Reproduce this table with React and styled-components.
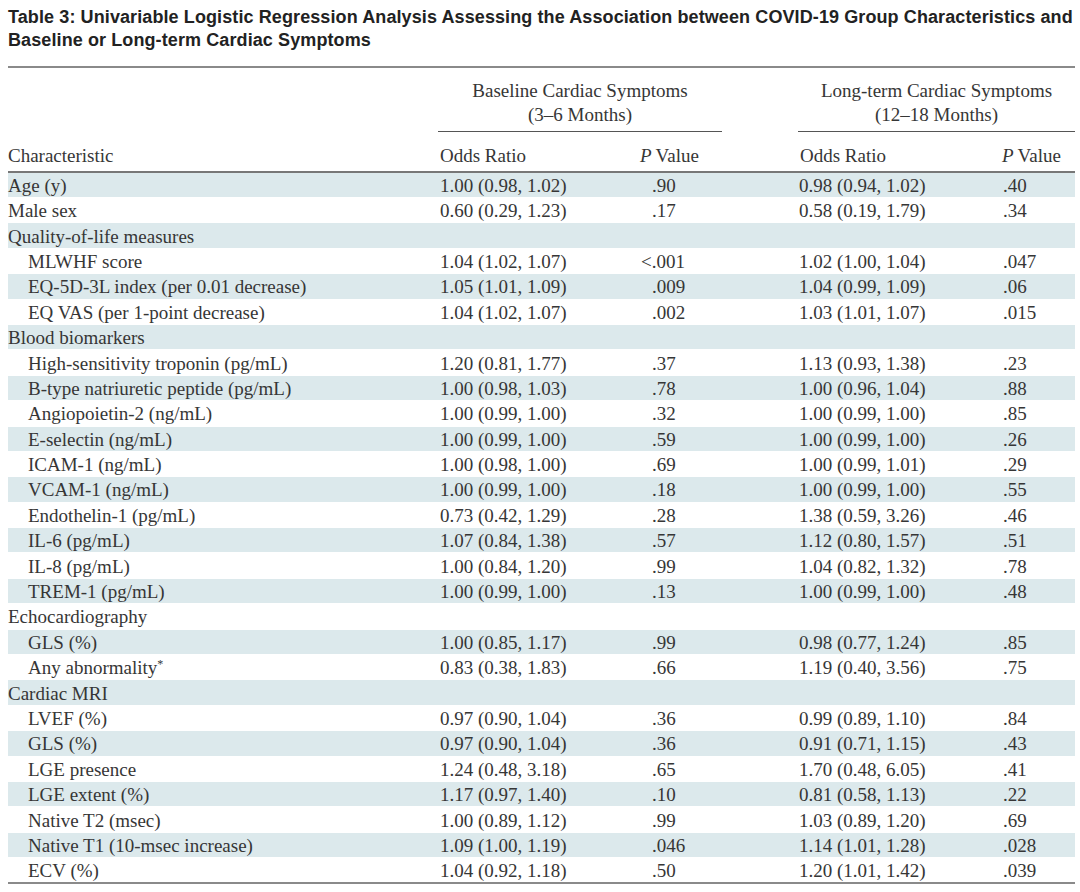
import styled, { createGlobalStyle } from 'styled-components';

const GlobalStyle = createGlobalStyle`
  body {
    margin: 0;
    background: #ffffff;
  }
`;

const rows = [
  { label: 'Age (y)', or1: '1.00 (0.98, 1.02)', p1: '.90', or2: '0.98 (0.94, 1.02)', p2: '.40' },
  { label: 'Male sex', or1: '0.60 (0.29, 1.23)', p1: '.17', or2: '0.58 (0.19, 1.79)', p2: '.34' },
  { label: 'Quality-of-life measures', group: true },
  { label: 'MLWHF score', sub: true, or1: '1.04 (1.02, 1.07)', p1: '<.001', or2: '1.02 (1.00, 1.04)', p2: '.047' },
  { label: 'EQ-5D-3L index (per 0.01 decrease)', sub: true, or1: '1.05 (1.01, 1.09)', p1: '.009', or2: '1.04 (0.99, 1.09)', p2: '.06' },
  { label: 'EQ VAS (per 1-point decrease)', sub: true, or1: '1.04 (1.02, 1.07)', p1: '.002', or2: '1.03 (1.01, 1.07)', p2: '.015' },
  { label: 'Blood biomarkers', group: true },
  { label: 'High-sensitivity troponin (pg/mL)', sub: true, or1: '1.20 (0.81, 1.77)', p1: '.37', or2: '1.13 (0.93, 1.38)', p2: '.23' },
  { label: 'B-type natriuretic peptide (pg/mL)', sub: true, or1: '1.00 (0.98, 1.03)', p1: '.78', or2: '1.00 (0.96, 1.04)', p2: '.88' },
  { label: 'Angiopoietin-2 (ng/mL)', sub: true, or1: '1.00 (0.99, 1.00)', p1: '.32', or2: '1.00 (0.99, 1.00)', p2: '.85' },
  { label: 'E-selectin (ng/mL)', sub: true, or1: '1.00 (0.99, 1.00)', p1: '.59', or2: '1.00 (0.99, 1.00)', p2: '.26' },
  { label: 'ICAM-1 (ng/mL)', sub: true, or1: '1.00 (0.98, 1.00)', p1: '.69', or2: '1.00 (0.99, 1.01)', p2: '.29' },
  { label: 'VCAM-1 (ng/mL)', sub: true, or1: '1.00 (0.99, 1.00)', p1: '.18', or2: '1.00 (0.99, 1.00)', p2: '.55' },
  { label: 'Endothelin-1 (pg/mL)', sub: true, or1: '0.73 (0.42, 1.29)', p1: '.28', or2: '1.38 (0.59, 3.26)', p2: '.46' },
  { label: 'IL-6 (pg/mL)', sub: true, or1: '1.07 (0.84, 1.38)', p1: '.57', or2: '1.12 (0.80, 1.57)', p2: '.51' },
  { label: 'IL-8 (pg/mL)', sub: true, or1: '1.00 (0.84, 1.20)', p1: '.99', or2: '1.04 (0.82, 1.32)', p2: '.78' },
  { label: 'TREM-1 (pg/mL)', sub: true, or1: '1.00 (0.99, 1.00)', p1: '.13', or2: '1.00 (0.99, 1.00)', p2: '.48' },
  { label: 'Echocardiography', group: true },
  { label: 'GLS (%)', sub: true, or1: '1.00 (0.85, 1.17)', p1: '.99', or2: '0.98 (0.77, 1.24)', p2: '.85' },
  { label: 'Any abnormality', mark: '*', sub: true, or1: '0.83 (0.38, 1.83)', p1: '.66', or2: '1.19 (0.40, 3.56)', p2: '.75' },
  { label: 'Cardiac MRI', group: true },
  { label: 'LVEF (%)', sub: true, or1: '0.97 (0.90, 1.04)', p1: '.36', or2: '0.99 (0.89, 1.10)', p2: '.84' },
  { label: 'GLS (%)', sub: true, or1: '0.97 (0.90, 1.04)', p1: '.36', or2: '0.91 (0.71, 1.15)', p2: '.43' },
  { label: 'LGE presence', sub: true, or1: '1.24 (0.48, 3.18)', p1: '.65', or2: '1.70 (0.48, 6.05)', p2: '.41' },
  { label: 'LGE extent (%)', sub: true, or1: '1.17 (0.97, 1.40)', p1: '.10', or2: '0.81 (0.58, 1.13)', p2: '.22' },
  { label: 'Native T2 (msec)', sub: true, or1: '1.00 (0.89, 1.12)', p1: '.99', or2: '1.03 (0.89, 1.20)', p2: '.69' },
  { label: 'Native T1 (10-msec increase)', sub: true, or1: '1.09 (1.00, 1.19)', p1: '.046', or2: '1.14 (1.01, 1.28)', p2: '.028' },
  { label: 'ECV (%)', sub: true, or1: '1.04 (0.92, 1.18)', p1: '.50', or2: '1.20 (1.01, 1.42)', p2: '.039' },
];

function PValue({ value }) {
  if (value && value.startsWith('<')) {
    return <><Less>&lt;</Less>{value.slice(1)}</>;
  }
  return value || null;
}

export default function App() {
  return (
    <>
      <GlobalStyle />
      <Page>
        <Title>
          Table 3: Univariable Logistic Regression Analysis Assessing the Association between COVID-19 Group Characteristics and
          <br />
          Baseline or Long-term Cardiac Symptoms
        </Title>
        <Table>
          <colgroup>
            <col style={{ width: 430 }} />
            <col style={{ width: 202 }} />
            <col style={{ width: 158 }} />
            <col style={{ width: 204 }} />
            <col style={{ width: 73 }} />
          </colgroup>
          <thead>
            <GroupRow>
              <th />
              <GroupCell colSpan={2}>
                <GroupLabel $lineRight={76}>Baseline Cardiac Symptoms<br />(3–6 Months)</GroupLabel>
              </GroupCell>
              <GroupCell colSpan={2}>
                <GroupLabel $lineRight={0}>Long-term Cardiac Symptoms<br />(12–18 Months)</GroupLabel>
              </GroupCell>
            </GroupRow>
            <HeadRow>
              <HeadCell>Characteristic</HeadCell>
              <HeadCell $pad={2}>Odds Ratio</HeadCell>
              <HeadCell $pad={0}><em>P</em>Value</HeadCell>
              <HeadCell $pad={2}>Odds Ratio</HeadCell>
              <HeadCell $pad={0}><em>P</em>Value</HeadCell>
            </HeadRow>
          </thead>
          <tbody>
            {rows.map((r, i) => (
              <BodyRow key={i} $shaded={i % 2 === 0}>
                <LabelCell $sub={r.sub}>
                  {r.label}
                  {r.mark && <sup>{r.mark}</sup>}
                </LabelCell>
                <ValueCell $pad={2}>{r.or1}</ValueCell>
                <ValueCell $pad={12}><PValue value={r.p1} /></ValueCell>
                <ValueCell $pad={1}>{r.or2}</ValueCell>
                <ValueCell $pad={1}><PValue value={r.p2} /></ValueCell>
              </BodyRow>
            ))}
          </tbody>
        </Table>
      </Page>
    </>
  );
}

const Page = styled.div`
  width: 1067px;
  padding: 6px 0 0 8px;
  color: #363636;
`;

const Title = styled.h1`
  margin: 0;
  padding-bottom: 14px;
  border-bottom: 2px solid #8a8a8a;
  font-family: 'Liberation Sans', Arial, sans-serif;
  font-weight: 700;
  font-size: 18px;
  letter-spacing: 0.1px;
  line-height: 23px;
  white-space: nowrap;
  color: #222222;
`;

const Table = styled.table`
  width: 1067px;
  table-layout: fixed;
  border-collapse: collapse;
  font-family: 'Liberation Serif', 'Times New Roman', serif;
  font-size: 19px;
  color: #363636;
  border-bottom: 2px solid #8a8a8a;
`;

const GroupRow = styled.tr`
  height: 64px;
`;

const GroupCell = styled.th`
  padding: 0;
  vertical-align: bottom;
  font-weight: 400;
`;

const GroupLabel = styled.div`
  margin-right: ${p => p.$lineRight}px;
  padding-bottom: 4px;
  border-bottom: 1px solid #555555;
  text-align: center;
  line-height: 24px;
`;

const HeadRow = styled.tr`
  height: 40px;
  border-bottom: 2px solid #777777;
`;

const HeadCell = styled.th`
  padding: 0 0 3px ${p => p.$pad || 0}px;
  text-align: left;
  font-weight: 400;
  vertical-align: bottom;
  line-height: 24px;

  em {
    font-style: italic;
    margin-right: 4px;
  }
`;

const BodyRow = styled.tr`
  height: 25.4px;
  background: ${p => (p.$shaded ? '#dce9ec' : '#ffffff')};
  border-top: 1px solid #ffffff;
`;

const LabelCell = styled.td`
  padding: 2px 0 0 ${p => (p.$sub ? 20 : 0)}px;
  white-space: nowrap;
  line-height: 22px;

  sup {
    font-size: 12px;
    vertical-align: 6px;
    line-height: 0;
  }
`;

const ValueCell = styled.td`
  padding: 2px 0 0 ${p => p.$pad}px;
  white-space: nowrap;
  line-height: 22px;
`;

const Less = styled.span`
  margin-left: -11px;
`;
